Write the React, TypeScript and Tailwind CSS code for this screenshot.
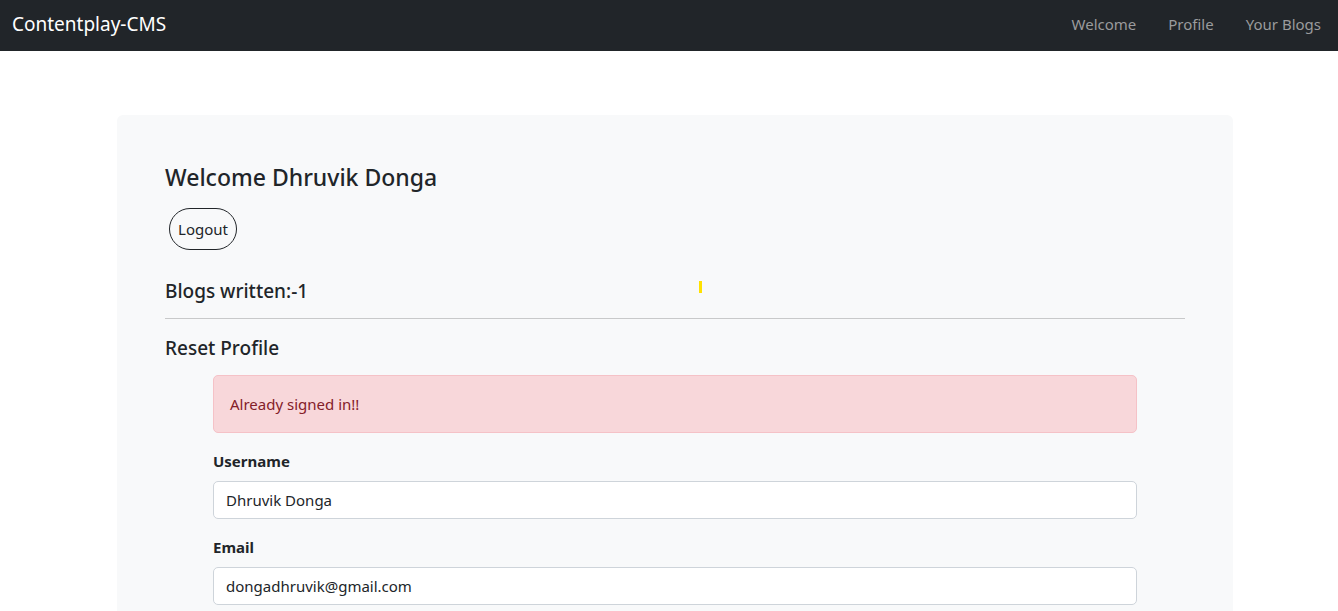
import React from 'react'

const font = { fontFamily: '"Noto Sans", "Open Sans", Arial, sans-serif' }

function Navbar() {
  return (
    <nav className="h-[51px] bg-[#212529] flex items-center justify-between pl-3">
      <a href="#" className="text-[19px] text-white leading-none pb-[2px]">Contentplay-CMS</a>
      <ul className="flex items-center pr-[1px]">
        {['Welcome', 'Profile', 'Your Blogs'].map((l) => (
          <li key={l}>
            <a href="#" className="block px-4 text-[15px] leading-5 pb-[4px] text-[#9a9b9d]">{l}</a>
          </li>
        ))}
      </ul>
    </nav>
  )
}

function Field({ label, value }: { label: string; value: string }) {
  return (
    <div className="mb-4">
      <label className="block text-[15px] font-bold leading-6 mb-2 text-[#212529]">{label}</label>
      <input
        readOnly
        value={value}
        className="w-full h-[38px] bg-white border border-[#ced4da] rounded-[5px] px-3 text-[15px] text-[#212529] outline-none"
      />
    </div>
  )
}

export default function App() {
  return (
    <div className="min-h-screen bg-white text-[#212529]" style={font}>
      <Navbar />
      <div className="ml-[117px] w-[1116px] pt-16">
        <div className="relative bg-[#f8f9fa] rounded-md px-12 pt-12 pb-12">
          <span className="absolute left-[582px] top-[166px] w-[3px] h-[12px] bg-[#ffe100]" />
          <h4 className="text-[23px] font-medium leading-[29px] mb-[16px]">Welcome Dhruvik Donga</h4>
          <button className="ml-1 w-[68px] h-[42px] rounded-full border border-[#212529] text-[15px] text-[#212529]">
            Logout
          </button>
          <h5 className="mt-[29px] text-[19px] font-medium leading-6">Blogs written:-1</h5>
          <hr className="mt-[15px] border-0 border-t border-[#c8c9ca]" />
          <h5 className="mt-[17px] text-[19px] font-medium leading-6">Reset Profile</h5>
          <div className="mx-12 mt-[15px]">
            <div className="h-[58px] mb-4 flex items-center px-4 bg-[#f8d7da] border border-[#f5c2c7] rounded-[5px] text-[#842029] text-[15px]">
              Already signed in!!
            </div>
            <Field label="Username" value="Dhruvik Donga" />
            <Field label="Email" value="dongadhruvik@gmail.com" />
          </div>
        </div>
      </div>
    </div>
  )
}
